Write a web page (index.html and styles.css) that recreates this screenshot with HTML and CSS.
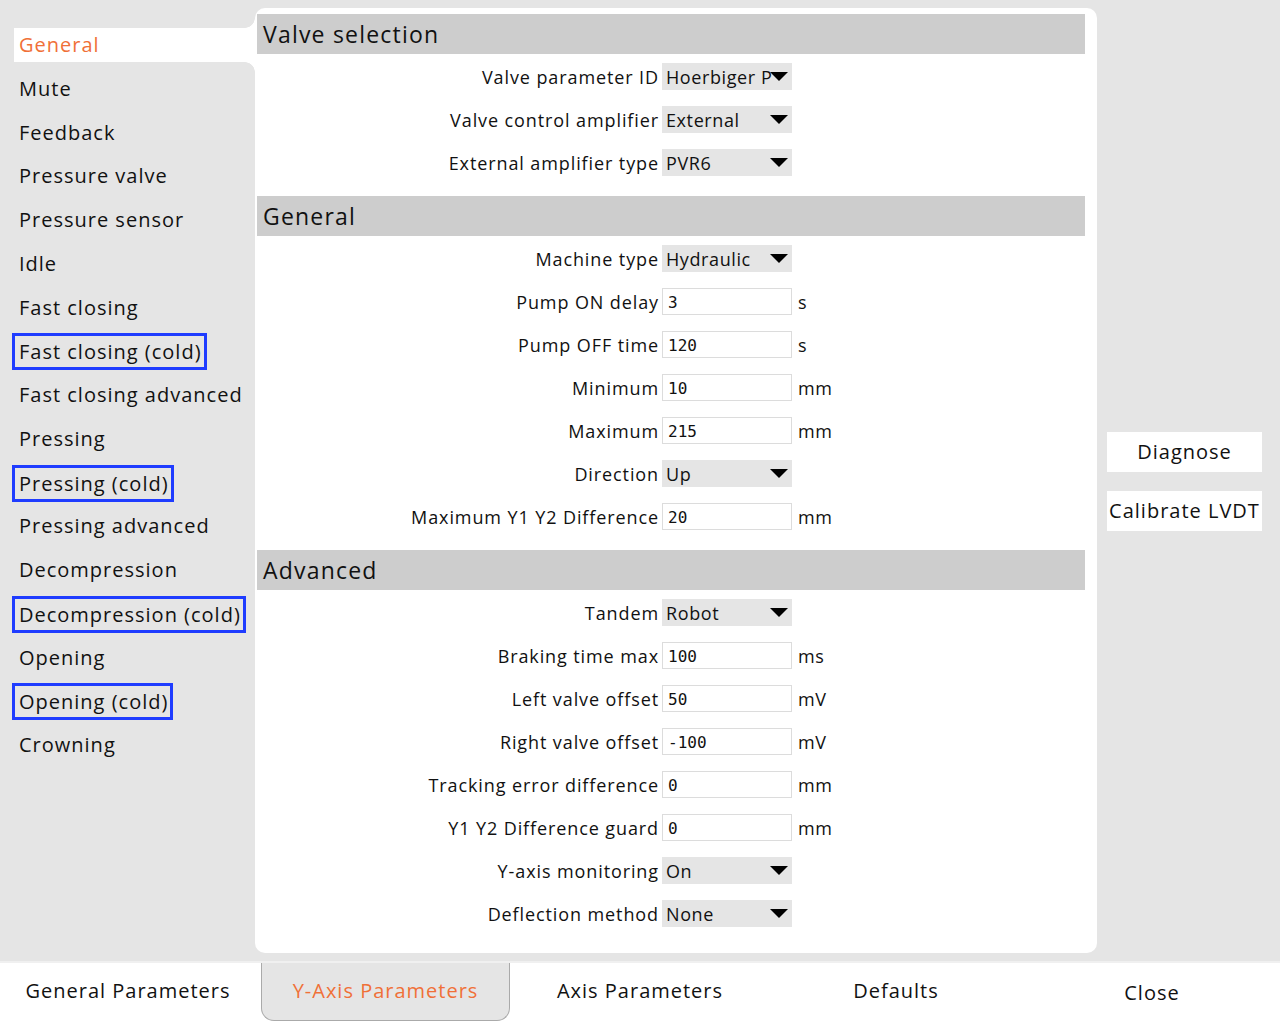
FILE: index.html
```html
<!DOCTYPE html>
<html>
<head>
<meta charset="utf-8">
<link rel="stylesheet" href="styles.css">
</head>
<body>
<div class="app">
  <div class="main">
    <nav class="sidebar">
      <div class="nav-item active">General</div>
      <div class="nav-item">Mute</div>
      <div class="nav-item">Feedback</div>
      <div class="nav-item">Pressure valve</div>
      <div class="nav-item">Pressure sensor</div>
      <div class="nav-item">Idle</div>
      <div class="nav-item">Fast closing</div>
      <div class="nav-item"><span class="boxed">Fast closing (cold)</span></div>
      <div class="nav-item clip">Fast closing advanced</div>
      <div class="nav-item">Pressing</div>
      <div class="nav-item"><span class="boxed">Pressing (cold)</span></div>
      <div class="nav-item">Pressing advanced</div>
      <div class="nav-item">Decompression</div>
      <div class="nav-item"><span class="boxed">Decompression (cold)</span></div>
      <div class="nav-item">Opening</div>
      <div class="nav-item"><span class="boxed">Opening (cold)</span></div>
      <div class="nav-item">Crowning</div>
    </nav>

    <section class="panel">
      <h2 class="sec-head">Valve selection</h2>
      <div class="rows">
        <div class="row"><label>Valve parameter ID</label><div class="select"><span>Hoerbiger P</span><i class="tri"></i></div></div>
        <div class="row"><label>Valve control amplifier</label><div class="select"><span>External</span><i class="tri"></i></div></div>
        <div class="row"><label>External amplifier type</label><div class="select"><span>PVR6</span><i class="tri"></i></div></div>
      </div>

      <h2 class="sec-head">General</h2>
      <div class="rows">
        <div class="row"><label>Machine type</label><div class="select"><span>Hydraulic</span><i class="tri"></i></div></div>
        <div class="row"><label>Pump ON delay</label><div class="input">3</div><span class="unit">s</span></div>
        <div class="row"><label>Pump OFF time</label><div class="input">120</div><span class="unit">s</span></div>
        <div class="row"><label>Minimum</label><div class="input">10</div><span class="unit">mm</span></div>
        <div class="row"><label>Maximum</label><div class="input">215</div><span class="unit">mm</span></div>
        <div class="row"><label>Direction</label><div class="select"><span>Up</span><i class="tri"></i></div></div>
        <div class="row"><label>Maximum Y1 Y2 Difference</label><div class="input">20</div><span class="unit">mm</span></div>
      </div>

      <h2 class="sec-head">Advanced</h2>
      <div class="rows">
        <div class="row"><label>Tandem</label><div class="select"><span>Robot</span><i class="tri"></i></div></div>
        <div class="row"><label>Braking time max</label><div class="input">100</div><span class="unit">ms</span></div>
        <div class="row"><label>Left valve offset</label><div class="input">50</div><span class="unit">mV</span></div>
        <div class="row"><label>Right valve offset</label><div class="input">-100</div><span class="unit">mV</span></div>
        <div class="row"><label>Tracking error difference</label><div class="input">0</div><span class="unit">mm</span></div>
        <div class="row"><label>Y1 Y2 Difference guard</label><div class="input">0</div><span class="unit">mm</span></div>
        <div class="row"><label>Y-axis monitoring</label><div class="select"><span>On</span><i class="tri"></i></div></div>
        <div class="row"><label>Deflection method</label><div class="select"><span>None</span><i class="tri"></i></div></div>
      </div>
    </section>

    <aside class="actions">
      <div class="btn">Diagnose</div>
      <div class="btn">Calibrate LVDT</div>
    </aside>
  </div>

  <footer class="tabs">
    <div class="tab">General Parameters</div>
    <div class="tab current">Y-Axis Parameters</div>
    <div class="tab">Axis Parameters</div>
    <div class="tab">Defaults</div>
    <div class="tab close">Close</div>
  </footer>
</div>
</body>
</html>
```

FILE: styles.css
```css
* { box-sizing: border-box; }
html, body { margin: 0; padding: 0; }
body {
  background: #e5e5e5;
  font-family: "Open Sans", "Liberation Sans", sans-serif;
  color: #111;
  width: 1280px;
  height: 1024px;
  overflow: hidden;
}
.app { display: flex; flex-direction: column; height: 1024px; }
.main { display: flex; height: 961px; }

/* sidebar */
.sidebar {
  width: 255px;
  flex: none;
  padding-top: 28px;
  display: flex;
  flex-direction: column;
}
.nav-item {
  position: relative;
  height: 34px;
  margin-bottom: 9.75px;
  margin-left: 14px;
  padding-left: 5px;
  font-size: 20px;
  letter-spacing: 1px;
  line-height: 34px;
  white-space: nowrap;
}
.nav-item.clip { overflow: hidden; width: 227px; }
.nav-item.active {
  background: #fff;
  color: #f07038;
}
.nav-item.active::before,
.nav-item.active::after {
  content: "";
  position: absolute;
  right: 0;
  width: 10px;
  height: 10px;
}
.nav-item.active::before {
  top: -10px;
  background: radial-gradient(circle at 0 0, transparent 9.5px, #fff 10px);
}
.nav-item.active::after {
  bottom: -10px;
  background: radial-gradient(circle at 0 100%, transparent 9.5px, #fff 10px);
}
.boxed {
  display: inline-block;
  margin-left: -7px;
  padding: 0 2px 0 4px;
  border: 3px solid #1f3cff;
  height: 37px;
  line-height: 31px;
  margin-top: -1px;
}

/* panel */
.panel {
  width: 842px;
  flex: none;
  background: #fff;
  border-radius: 10px;
  margin-top: 8px;
  height: 945px;
  padding: 6px 12px 0 2px;
}
.sec-head {
  margin: 0;
  height: 40px;
  background: #cdcdcd;
  font-weight: normal;
  font-size: 23px;
  letter-spacing: 1.2px;
  line-height: 40px;
  padding-left: 6px;
}
.rows {
  display: flex;
  flex-direction: column;
  gap: 16px;
  padding: 9px 0 20px;
}
.row {
  display: flex;
  align-items: center;
  height: 27px;
}
.row label {
  width: 405px;
  text-align: right;
  font-size: 18px;
  letter-spacing: 0.9px;
  padding-right: 3px;
  white-space: nowrap;
}
.select {
  position: relative;
  width: 130px;
  height: 27px;
  background: #e5e5e5;
  font-size: 18px;
  letter-spacing: 0.6px;
  line-height: 29px;
  padding-left: 4px;
  overflow: hidden;
  white-space: nowrap;
}
.tri {
  position: absolute;
  right: 4px;
  top: 9px;
  width: 0;
  height: 0;
  border-left: 9px solid transparent;
  border-right: 9px solid transparent;
  border-top: 9px solid #000;
}
.input {
  width: 130px;
  height: 27px;
  border: 1px solid #dcdcdc;
  background: #fff;
  font-family: "DejaVu Sans Mono", "Liberation Mono", monospace;
  font-size: 16px;
  line-height: 27px;
  padding-left: 5px;
}
.unit {
  margin-left: 6px;
  font-size: 18px;
  letter-spacing: 0.6px;
}

/* right actions */
.actions {
  flex: 1;
  display: flex;
  flex-direction: column;
  justify-content: center;
  gap: 19px;
  padding: 2px 18px 0 10px;
}
.btn {
  height: 40px;
  background: #fff;
  font-size: 20px;
  letter-spacing: 1px;
  line-height: 40px;
  text-align: center;
  white-space: nowrap;
}

/* bottom tabs */
.tabs {
  flex: 1;
  display: flex;
  background: #fff;
  border-top: 2px solid #f0f0f0;
}
.tab {
  width: 256px;
  text-align: center;
  font-size: 20px;
  letter-spacing: 1px;
  line-height: 56px;
  height: 58px;
}
.tab.current {
  margin: 0 2px 0 5px;
  width: 249px;
  background: #e5e5e5;
  color: #f07038;
  border: 1px solid #aaa;
  border-top: none;
  border-radius: 0 0 13px 13px;
}
.tab.close { line-height: 60px; }
```
